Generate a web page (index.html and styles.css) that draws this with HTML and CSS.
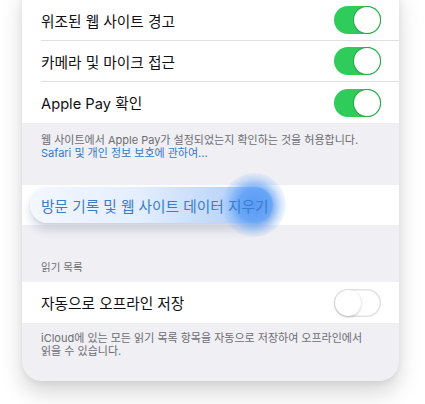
FILE: index.html
```html
<!DOCTYPE html>
<html lang="ko">
<head>
<meta charset="utf-8">
<link rel="stylesheet" href="styles.css">
</head>
<body>
<div class="card">
  <div class="group first">
    <div class="row"><div class="inner sep"><span class="label">위조된 웹 사이트 경고</span><span class="toggle on"><span class="knob"></span></span></div></div>
    <div class="row"><div class="inner sep"><span class="label">카메라 및 마이크 접근</span><span class="toggle on"><span class="knob"></span></span></div></div>
    <div class="row"><div class="inner"><span class="label">Apple Pay 확인</span><span class="toggle on"><span class="knob"></span></span></div></div>
  </div>
  <div class="footer f1">
    <p>웹 사이트에서 Apple Pay가 설정되었는지 확인하는 것을 허용합니다.</p>
    <p class="link">Safari 및 개인 정보 보호에 관하여...</p>
  </div>
  <div class="group">
    <div class="row action">
      <span class="pill"><span class="glow"></span></span>
      <div class="inner"><span class="label blue">방문 기록 및 웹 사이트 데이터 지우기</span></div>
    </div>
  </div>
  <div class="header">읽기 목록</div>
  <div class="group">
    <div class="row"><div class="inner"><span class="label">자동으로 오프라인 저장</span><span class="toggle"><span class="knob"></span></span></div></div>
  </div>
  <div class="footer f2">
    <p>iCloud에 있는 모든 읽기 목록 항목을 자동으로 저장하여 오프라인에서</p>
    <p>읽을 수 있습니다.</p>
  </div>
</div>
</body>
</html>
```

FILE: styles.css
```css
html, body {
  margin: 0;
  padding: 0;
  background: #ffffff;
}
body {
  font-family: "Inter", "Noto Sans CJK KR", sans-serif;
  overflow: hidden;
  height: 404px;
}
.card {
  margin: -20px 0 0 22px;
  width: 377px;
  background: #efeff4;
  border-radius: 20px;
  box-shadow: 0 12px 22px rgba(0, 0, 0, 0.16), 0 2px 6px rgba(0, 0, 0, 0.06);
  overflow: hidden;
}
.group {
  background: #ffffff;
}
.group.first {
  padding-top: 20px;
}
.row {
  position: relative;
  padding-left: 19px;
}
.inner {
  height: 41px;
  display: flex;
  align-items: center;
  justify-content: space-between;
  padding-right: 18px;
  position: relative;
  z-index: 2;
}
.inner.sep {
  border-bottom: 1px solid #e0e0e4;
  height: 40px;
}
.label {
  font-size: 14.7px;
  color: #111114;
}
.label.blue {
  color: #3a7ccc;
}
.toggle {
  width: 47px;
  height: 28px;
  border-radius: 14px;
  background: #ffffff;
  box-shadow: inset 0 0 0 1.5px #e2e2e6;
  display: flex;
  align-items: center;
  padding: 0 1px;
  box-sizing: border-box;
}
.toggle.on {
  background: #2fcb5b;
  box-shadow: none;
  justify-content: flex-end;
}
.knob {
  width: 26px;
  height: 26px;
  border-radius: 50%;
  background: #ffffff;
  box-shadow: 0 1px 3px rgba(0, 0, 0, 0.22);
}
.toggle.on .knob {
  box-shadow: 0 0 0 1px #29a94c, 0 1px 2px rgba(0, 0, 0, 0.15);
}
.footer {
  color: #6d6d72;
  font-size: 11px;
  line-height: 13px;
  padding: 11px 19px 0;
}
.footer p {
  margin: 0;
}
.f1 {
  height: 51px;
}
.f2 {
  height: 49px;
  padding-top: 9px;
}
.link {
  color: #2f7bcf;
}
.action .inner {
  height: 40px;
}
.header {
  height: 57px;
  box-sizing: border-box;
  display: flex;
  align-items: flex-end;
  padding: 0 19px 8px;
  font-size: 10.5px;
  color: #6d6d72;
}
.pill {
  position: absolute;
  left: 8px;
  top: 2px;
  width: 243px;
  height: 36px;
  border-radius: 18px;
  background: linear-gradient(90deg, #f3f7fe 0%, #e4eefd 45%, #bcd6fb 80%, #8dbbf8 100%);
  box-shadow: 0 7px 10px rgba(40, 60, 100, 0.18), 0 1px 3px rgba(0, 0, 0, 0.08);
  z-index: 1;
}
.glow {
  position: absolute;
  left: 192px;
  top: -14px;
  width: 64px;
  height: 64px;
  border-radius: 50%;
  background: radial-gradient(circle, rgba(86, 152, 245, 0.95) 0%, rgba(96, 160, 246, 0.85) 36%, rgba(120, 175, 248, 0.35) 58%, rgba(140, 185, 250, 0) 75%);
}
```
